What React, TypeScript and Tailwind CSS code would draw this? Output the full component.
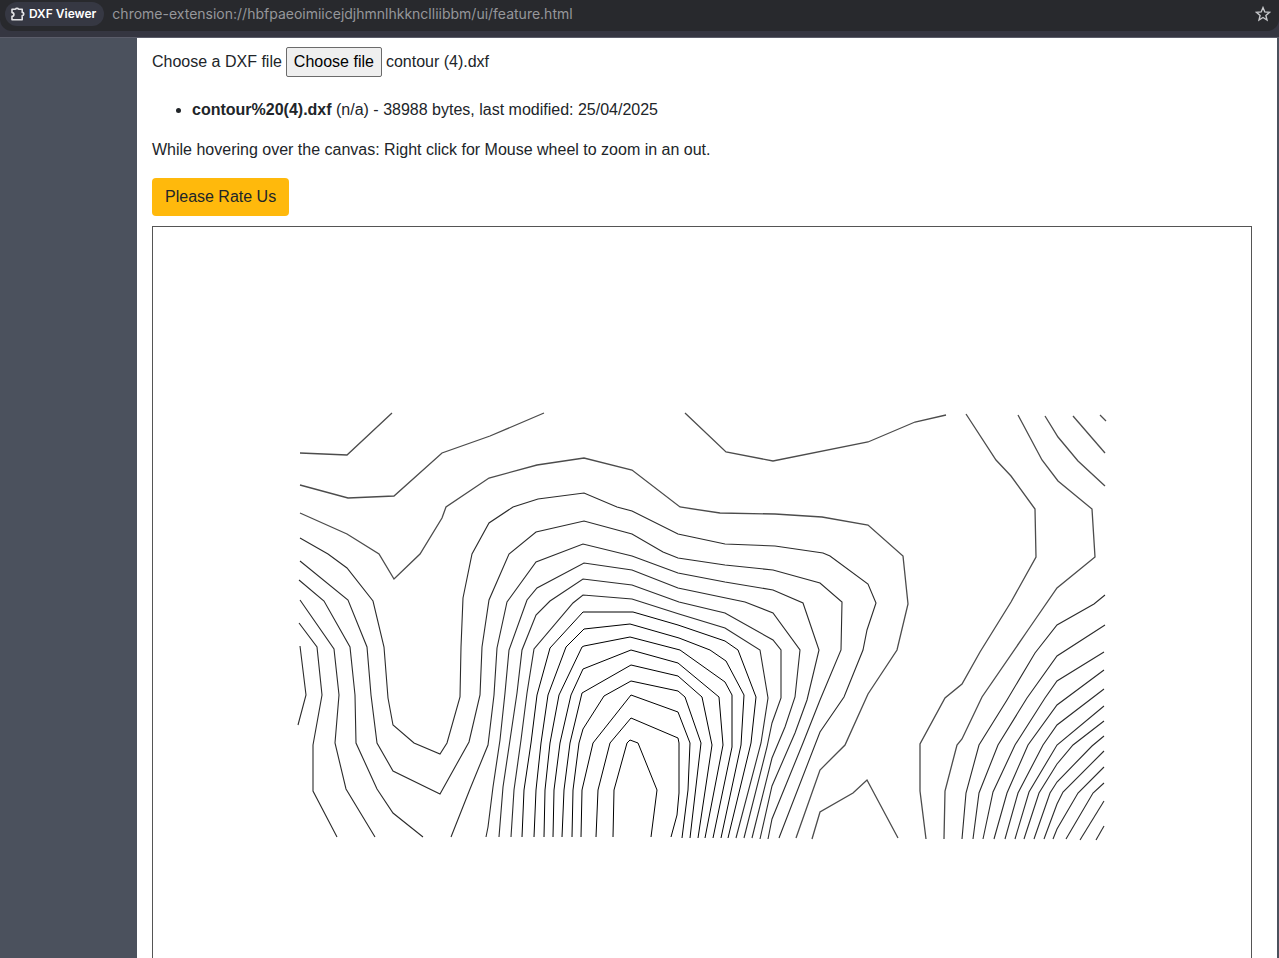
import { useRef, useState } from "react";

type Contour = { tone: "light" | "mid" | "dark"; points: string };

const contours: Contour[] = [
  { tone: "light", points: "300,453 347,455 392,413" },
  { tone: "light", points: "300,485 348,498 394,496 442,453 490,436 544,413" },
  { tone: "light", points: "685,413 726,452 773,461 868,442 915,422 946,415" },
  { tone: "light", points: "300,513 347,534 379,554 394,579 420,554 442,518 446,507 489,478 537,465 584,458 632,470 680,507 720,513 775,514 822,517 868,525 903,556 908,604 897,650 868,694 845,745 820,770 796,838" },
  { tone: "light", points: "812,839 820,812 853,793 867,780 898,838" },
  { tone: "mid", points: "300,538 328,554 347,568 373,601 384,647 388,698 393,725 414,743 440,754 447,743 460,697 461,647 463,598 472,554 489,523 513,507 538,499 584,493 617,507 632,511 678,534 725,544 775,546 823,553 830,556 868,584 876,603 867,630 863,650 844,697 820,732 779,838" },
  { tone: "mid", points: "300,561 348,600 367,647 371,695 377,743 393,771 440,794 469,742 480,695 482,647 489,600 509,554 536,532 584,521 632,534 663,552 678,558 725,565 773,570 820,583 842,602 841,650 820,700 803,743 772,819 768,839" },
  { tone: "mid", points: "299,580 324,601 350,647 355,695 356,743 377,789 393,813 423,837" },
  { tone: "mid", points: "300,600 334,649 339,695 335,743 346,789 375,837" },
  { tone: "mid", points: "299,623 317,647 322,695 313,745 313,791 337,837" },
  { tone: "mid", points: "300,646 306,695 298,725" },
  { tone: "mid", points: "451,837 470,789 488,745 494,695 497,648 507,602 536,562 583,544 632,556 678,573 725,582 773,590 803,603 819,650 807,700 795,733 772,786 760,839" },
  { tone: "mid", points: "486,837 488,827 493,787 500,740 505,693 509,650 527,600 537,588 584,563 632,570 678,588 745,602 773,613 800,650 795,697 785,727 772,758 752,838" },
  { tone: "mid", points: "499,837 503,787 510,740 517,693 522,650 536,615 550,601 583,579 632,585 679,602 725,613 773,640 781,650 781,698 772,723 767,747 744,838" },
  { tone: "mid", points: "511,837 514,790 521,740 527,693 534,649 573,603 583,595 632,599 679,614 725,628 760,650 768,698 761,743 736,838" },
  { tone: "dark", points: "522,837 524,790 531,743 537,695 550,648 583,612 633,612 678,625 725,641 738,650 756,697 751,743 728,838" },
  { tone: "dark", points: "534,837 536,790 541,743 548,695 566,647 584,629 630,624 679,638 710,650 726,661 744,695 741,745 721,838" },
  { tone: "dark", points: "544,837 545,790 550,743 559,695 582,647 584,646 630,637 680,650 725,682 732,695 732,747 713,838" },
  { tone: "dark", points: "553,837 554,790 560,743 571,695 583,669 631,650 678,663 719,697 723,745 705,838" },
  { tone: "dark", points: "562,837 564,790 570,743 582,693 631,665 678,676 702,697 712,745 698,838" },
  { tone: "dark", points: "572,837 573,790 579,743 583,729 604,696 631,681 678,691 685,697 701,743 690,838" },
  { tone: "dark", points: "581,837 582,790 593,743 631,695 678,712 690,743 688,790 682,838" },
  { tone: "dark", points: "596,837 598,790 610,743 631,718 678,738 679,743 679,793 677,815 671,837" },
  { tone: "dark", points: "613,837 614,790 627,743 630,740 638,743 657,790 651,837" },
  { tone: "light", points: "966,414 996,460 1011,476 1035,509 1036,557 1011,602 980,652 962,684 945,698 920,744 920,791 926,839" },
  { tone: "light", points: "1018,415 1042,460 1058,481 1092,509 1095,557 1057,588 1028,630 982,697 962,739 957,745 945,791 944,839" },
  { tone: "light", points: "1045,416 1058,437 1078,461 1105,486" },
  { tone: "light", points: "1073,416 1105,453" },
  { tone: "light", points: "1100,415 1106,421" },
  { tone: "mid", points: "1105,595 1094,604 1057,625 1035,653 1007,700 979,745 966,793 962,839" },
  { tone: "mid", points: "1105,625 1057,656 1027,698 998,745 979,793 973,839" },
  { tone: "mid", points: "1104,652 1057,681 1045,698 1015,745 993,792 983,839" },
  { tone: "mid", points: "1104,670 1057,705 1028,745 1007,793 994,839" },
  { tone: "mid", points: "1104,689 1057,725 1043,745 1018,793 1005,839" },
  { tone: "mid", points: "1104,706 1057,745 1029,792 1015,839" },
  { tone: "mid", points: "1104,721 1073,745 1057,764 1039,793 1024,839" },
  { tone: "mid", points: "1104,736 1092,746 1057,782 1050,793 1034,839" },
  { tone: "mid", points: "1104,751 1063,792 1057,804 1044,839" },
  { tone: "mid", points: "1104,767 1078,793 1057,829 1053,839" },
  { tone: "mid", points: "1104,783 1093,793 1066,839" },
  { tone: "mid", points: "1104,801 1080,840" },
  { tone: "mid", points: "1104,826 1096,840" },
];

const toneClass = {
  light: "stroke-[#4c4c4c] stroke-[1.3]",
  mid: "stroke-[#2c2c2c] stroke-[1.1]",
  dark: "stroke-black stroke-1",
};

function AddressBar() {
  return (
    <header className="flex h-[38px] shrink-0 flex-col border-b border-[#5b5d6a] bg-[#353641] font-['Inter',sans-serif]">
      <div className="flex h-[31px] items-center rounded-br-xl rounded-bl-xl bg-[#28292d] pr-2 pb-[3px] pl-[5px]">
        <div className="flex h-6 shrink-0 items-center gap-1 rounded-full bg-[#363843] pr-2 pl-1.5 text-[12px] font-semibold text-white">
          <svg viewBox="0 0 14 14" className="h-3.5 w-3.5" fill="none" stroke="#e3e3e6" strokeWidth="1.6" strokeLinejoin="round" aria-hidden="true">
            <path d="M1 2.3h3.4a1.7 1.4 0 0 1 3.2 0h3.6v3.1a1.6 1.6 0 0 1 0 3.2v4.1H1V9.4a1.9 1.9 0 0 0 0-3.8z" />
          </svg>
          <span>DXF Viewer</span>
        </div>
        <div className="min-w-0 flex-1 truncate pl-2 text-[14px] text-[#96979b]">
          chrome-extension://hbfpaeoimiicejdjhmnlhkknclliibbm/ui/feature.html
        </div>
        <button type="button" aria-label="Bookmark this tab" className="shrink-0">
          <svg viewBox="0 0 16 16" className="h-4 w-4" fill="none" stroke="#c6c7ca" strokeWidth="1.4" aria-hidden="true">
            <path d="M8 1.6l1.8 4.3 4.7.4-3.6 3.1 1.1 4.6L8 11.5 4 14l1.1-4.6-3.6-3.1 4.7-.4z" />
          </svg>
        </button>
      </div>
    </header>
  );
}

export default function App() {
  const picker = useRef<HTMLInputElement>(null);
  const [fileName, setFileName] = useState("contour (4).dxf");

  return (
    <div className="flex h-screen flex-col overflow-hidden bg-[#4b515d] font-['Liberation_Sans',Arial,sans-serif] text-[16px] leading-6 text-[#212529]">
      <AddressBar />
      <div className="flex min-h-0 flex-1 pr-0.5 pl-[137px]">
        <main className="min-w-0 flex-1 overflow-hidden bg-white pt-[9px] pr-[25px] pl-[15px]">
          <div className="flex h-[30px] items-center gap-1">
            <label htmlFor="dxf-file">Choose a DXF file</label>
            <input
              id="dxf-file"
              ref={picker}
              type="file"
              accept=".dxf"
              className="hidden"
              onChange={(e) => setFileName(e.target.files?.[0]?.name ?? fileName)}
            />
            <button
              type="button"
              onClick={() => picker.current?.click()}
              className="h-[30px] rounded-xs border border-[#6b6b6b] bg-[#efefef] px-[7px] text-black"
            >
              Choose file
            </button>
            <span>{fileName}</span>
          </div>
          <ul className="mt-[21px] mb-4 list-disc pl-10">
            <li>
              <strong className="font-bold">contour%20(4).dxf</strong> (n/a) - 38988 bytes, last modified: 25/04/2025
            </li>
          </ul>
          <p className="mb-4">While hovering over the canvas: Right click for Mouse wheel to zoom in an out.</p>
          <button type="button" className="block h-[38px] rounded-[4px] bg-[#ffb90c] px-[13px]">
            Please Rate Us
          </button>
          <div className="mt-2.5 border border-[#555]">
            <svg viewBox="153 227 1098 800" className="block w-full" fill="none" role="img" aria-label="Contour drawing">
              {contours.map((c) => (
                <polyline key={c.points} points={c.points} className={toneClass[c.tone]} />
              ))}
            </svg>
          </div>
        </main>
      </div>
    </div>
  );
}
